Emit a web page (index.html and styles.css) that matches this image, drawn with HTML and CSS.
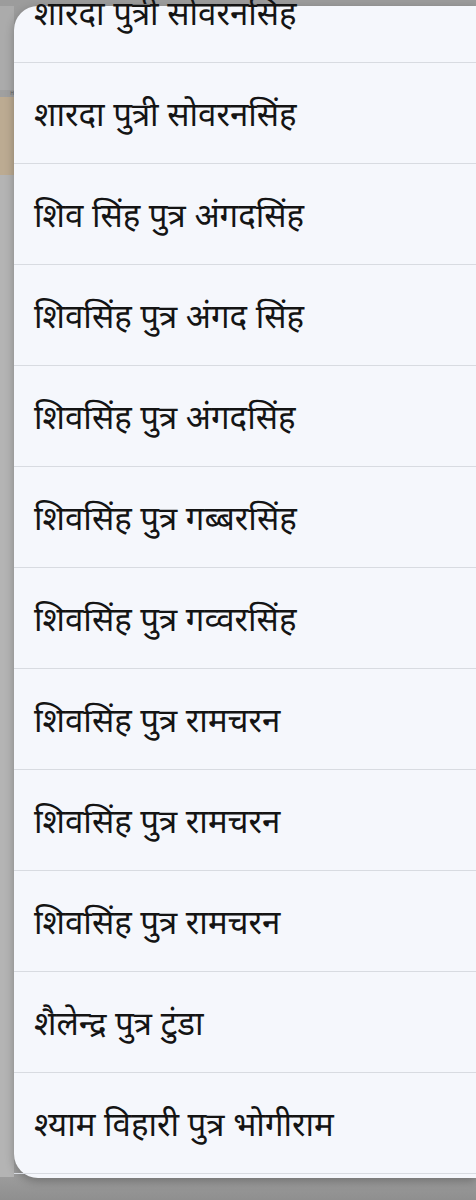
FILE: index.html
```html
<!DOCTYPE html>
<html lang="hi">
<head>
<meta charset="utf-8">
<title>सूची</title>
<link rel="stylesheet" href="styles.css">
</head>
<body>
<div class="screen">
  <div class="backdrop">
    <div class="bd-top"></div>
    <div class="bd-bar">H</div>
    <div class="bd-card"></div>
    <div class="bd-rest"></div>
  </div>
  <div class="sheet">
    <ul class="list">
      <li class="item first">शारदा पुत्री सोवरनसिंह</li>
      <li class="item">शारदा पुत्री सोवरनसिंह</li>
      <li class="item">शिव सिंह पुत्र अंगदसिंह</li>
      <li class="item">शिवसिंह पुत्र अंगद सिंह</li>
      <li class="item">शिवसिंह पुत्र अंगदसिंह</li>
      <li class="item">शिवसिंह पुत्र गब्बरसिंह</li>
      <li class="item">शिवसिंह पुत्र गव्वरसिंह</li>
      <li class="item">शिवसिंह पुत्र रामचरन</li>
      <li class="item">शिवसिंह पुत्र रामचरन</li>
      <li class="item">शिवसिंह पुत्र रामचरन</li>
      <li class="item">शैलेन्द्र पुत्र टुंडा</li>
      <li class="item">श्याम विहारी पुत्र भोगीराम</li>
    </ul>
  </div>
</div>
</body>
</html>
```

FILE: styles.css
```css
html, body {
  margin: 0;
  padding: 0;
}
body {
  width: 476px;
  height: 1200px;
  overflow: hidden;
  background: linear-gradient(#9c9c9c 0, #a4a4a4 1160px, #8f8f8f 1200px);
  font-family: "Noto Sans", "Noto Sans Devanagari", "Lohit Devanagari", sans-serif;
}
.screen {
  display: flex;
  align-items: flex-start;
  padding-top: 6px;
  height: 1194px;
}
.backdrop {
  width: 14px;
  flex: none;
  display: flex;
  flex-direction: column;
  height: 1171px;
}
.bd-top {
  height: 84px;
  background: #ababab;
}
.bd-bar {
  height: 7px;
  background: #a0a0a0;
  color: #666;
  font-size: 5px;
  line-height: 7px;
  text-align: right;
  overflow: hidden;
}
.bd-card {
  height: 78px;
  background: #bcab92;
}
.bd-rest {
  flex: 1;
  background: #b4b4b4;
}
.sheet {
  flex: 1;
  background: #f5f7fc;
  border-radius: 24px 0 0 24px;
  padding-bottom: 4px;
  box-shadow: 0 3px 10px rgba(0, 0, 0, 0.28);
}
.list {
  list-style: none;
  margin: 0;
  padding: 0;
}
.item {
  height: 100px;
  border-bottom: 1px solid #d8dbe1;
  display: flex;
  align-items: center;
  padding-left: 20px;
  font-size: 33px;
  color: #141414;
  white-space: nowrap;
}
.item.first {
  margin-top: -44px;
}
```
